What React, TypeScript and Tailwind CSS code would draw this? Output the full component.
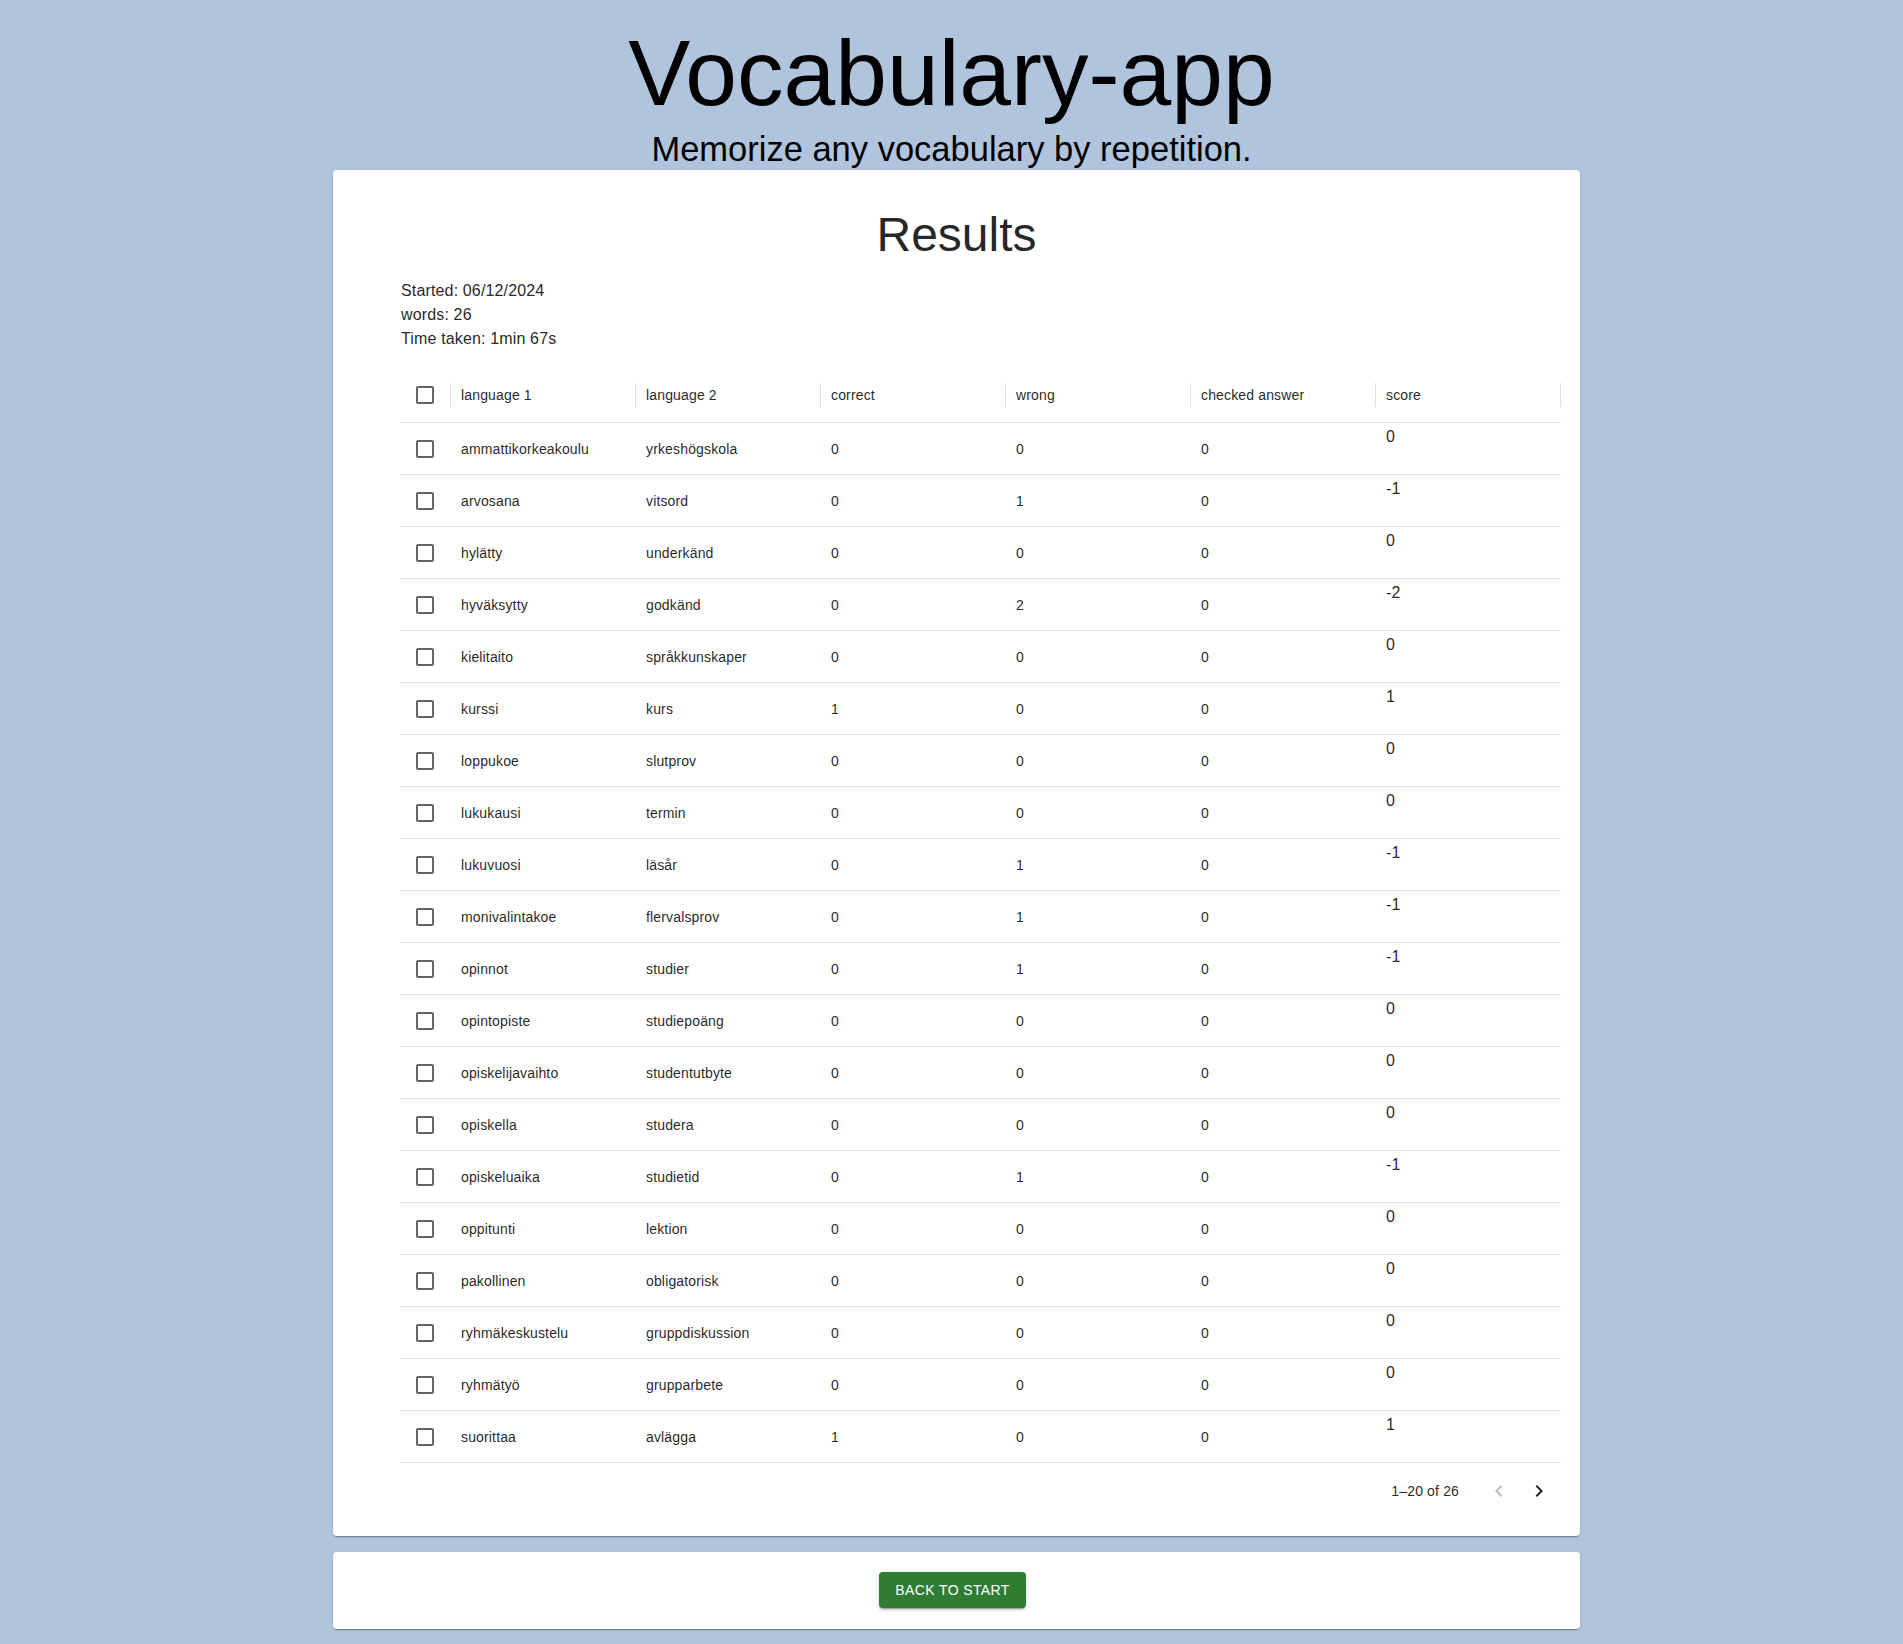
import { CSSProperties } from "react";

type Row = { l1: string; l2: string; correct: number; wrong: number; checked: number; score: number };

const rows: Row[] = [
  { l1: "ammattikorkeakoulu", l2: "yrkeshögskola", correct: 0, wrong: 0, checked: 0, score: 0 },
  { l1: "arvosana", l2: "vitsord", correct: 0, wrong: 1, checked: 0, score: -1 },
  { l1: "hylätty", l2: "underkänd", correct: 0, wrong: 0, checked: 0, score: 0 },
  { l1: "hyväksytty", l2: "godkänd", correct: 0, wrong: 2, checked: 0, score: -2 },
  { l1: "kielitaito", l2: "språkkunskaper", correct: 0, wrong: 0, checked: 0, score: 0 },
  { l1: "kurssi", l2: "kurs", correct: 1, wrong: 0, checked: 0, score: 1 },
  { l1: "loppukoe", l2: "slutprov", correct: 0, wrong: 0, checked: 0, score: 0 },
  { l1: "lukukausi", l2: "termin", correct: 0, wrong: 0, checked: 0, score: 0 },
  { l1: "lukuvuosi", l2: "läsår", correct: 0, wrong: 1, checked: 0, score: -1 },
  { l1: "monivalintakoe", l2: "flervalsprov", correct: 0, wrong: 1, checked: 0, score: -1 },
  { l1: "opinnot", l2: "studier", correct: 0, wrong: 1, checked: 0, score: -1 },
  { l1: "opintopiste", l2: "studiepoäng", correct: 0, wrong: 0, checked: 0, score: 0 },
  { l1: "opiskelijavaihto", l2: "studentutbyte", correct: 0, wrong: 0, checked: 0, score: 0 },
  { l1: "opiskella", l2: "studera", correct: 0, wrong: 0, checked: 0, score: 0 },
  { l1: "opiskeluaika", l2: "studietid", correct: 0, wrong: 1, checked: 0, score: -1 },
  { l1: "oppitunti", l2: "lektion", correct: 0, wrong: 0, checked: 0, score: 0 },
  { l1: "pakollinen", l2: "obligatorisk", correct: 0, wrong: 0, checked: 0, score: 0 },
  { l1: "ryhmäkeskustelu", l2: "gruppdiskussion", correct: 0, wrong: 0, checked: 0, score: 0 },
  { l1: "ryhmätyö", l2: "grupparbete", correct: 0, wrong: 0, checked: 0, score: 0 },
  { l1: "suorittaa", l2: "avlägga", correct: 1, wrong: 0, checked: 0, score: 1 },
];

const columns = ["language 1", "language 2", "correct", "wrong", "checked answer", "score"];

const font: CSSProperties = { fontFamily: '"Liberation Sans", Arial, Helvetica, sans-serif' };

function CheckBox() {
  return (
    <svg viewBox="0 0 24 24" className="h-6 w-6 fill-[rgba(0,0,0,0.6)]">
      <path d="M19 5v14H5V5h14m0-2H5c-1.11 0-2 .9-2 2v14c0 1.1.89 2 2 2h14c1.1 0 2-.9 2-2V5c0-1.1-.9-2-2-2z" />
    </svg>
  );
}

function HeaderCell({ label }: { label: string }) {
  return (
    <div className="flex items-center">
      <div className="flex-1 truncate pl-[10px]">{label}</div>
      <div className="h-6 w-px bg-[#e0e0e0]" />
    </div>
  );
}

export default function App() {
  return (
    <div className="min-h-screen bg-[#b0c4de] pb-[15px] text-[rgba(0,0,0,0.87)]" style={font}>
      <h1 className="pt-[27px] text-center text-[93px] leading-[92px] text-black">Vocabulary-app</h1>
      <p className="mt-[13px] text-center text-[34.5px] leading-[35px] text-black">Memorize any vocabulary by repetition.</p>

      <div className="mx-auto mt-[3px] w-[1257px] pl-[10px]">
        <div className="rounded bg-white pb-[17px] pl-[67px] pr-[19px] pt-[37px] tracking-[0.15px] shadow-[0px_2px_1px_-1px_rgba(0,0,0,0.2),0px_1px_1px_0px_rgba(0,0,0,0.14),0px_1px_3px_0px_rgba(0,0,0,0.12)]">
          <h3 className="-ml-[48px] text-center text-[48px] leading-[56px] tracking-normal">Results</h3>

          <div className="mt-4 pl-px text-base leading-6">
            <p>Started: 06/12/2024</p>
            <p>words: 26</p>
            <p>Time taken: 1min 67s</p>
          </div>

          <div className="mt-[16px] text-sm">
            <div className="grid h-14 grid-cols-[51px_repeat(6,1fr)] border-b border-[#e0e0e0]">
              <div className="flex items-center">
                <div className="flex flex-1 justify-center">
                  <CheckBox />
                </div>
                <div className="h-6 w-px bg-[#e0e0e0]" />
              </div>
              {columns.map(c => (
                <HeaderCell key={c} label={c} />
              ))}
            </div>

            {rows.map(r => (
              <div key={r.l1} className="grid h-[52px] grid-cols-[51px_repeat(6,1fr)] border-b border-[#e0e0e0]">
                <div className="flex items-center justify-center pr-px">
                  <CheckBox />
                </div>
                <div className="flex items-center pl-[10px]">{r.l1}</div>
                <div className="flex items-center pl-[10px]">{r.l2}</div>
                <div className="flex items-center pl-[10px]">{r.correct}</div>
                <div className="flex items-center pl-[10px]">{r.wrong}</div>
                <div className="flex items-center pl-[10px]">{r.checked}</div>
                <div className="pl-[10px] pt-[2px] text-base leading-6">{r.score}</div>
              </div>
            ))}

            <div className="flex h-14 items-center justify-end pr-[2px]">
              <span>1–20 of 26</span>
              <div className="ml-5 flex">
                <button className="flex h-10 w-10 items-center justify-center">
                  <svg viewBox="0 0 24 24" className="h-6 w-6 fill-[rgba(0,0,0,0.26)]">
                    <path d="M15.41 16.59 10.83 12l4.58-4.59L14 6l-6 6 6 6 1.41-1.41z" />
                  </svg>
                </button>
                <button className="flex h-10 w-10 items-center justify-center">
                  <svg viewBox="0 0 24 24" className="h-6 w-6 fill-[rgba(0,0,0,0.87)]">
                    <path d="M8.59 16.59 13.17 12 8.59 7.41 10 6l6 6-6 6-1.41-1.41z" />
                  </svg>
                </button>
              </div>
            </div>
          </div>
        </div>

        <div className="mt-[16px] flex justify-center rounded bg-white pb-[21px] pr-2 pt-5 shadow-[0px_2px_1px_-1px_rgba(0,0,0,0.2),0px_1px_1px_0px_rgba(0,0,0,0.14),0px_1px_3px_0px_rgba(0,0,0,0.12)]">
          <button className="h-9 rounded bg-[#2e7d32] px-4 text-sm font-medium uppercase leading-9 tracking-[0.4px] text-white shadow-[0px_3px_1px_-2px_rgba(0,0,0,0.2),0px_2px_2px_0px_rgba(0,0,0,0.14),0px_1px_5px_0px_rgba(0,0,0,0.12)]">
            Back to start
          </button>
        </div>
      </div>
    </div>
  );
}
